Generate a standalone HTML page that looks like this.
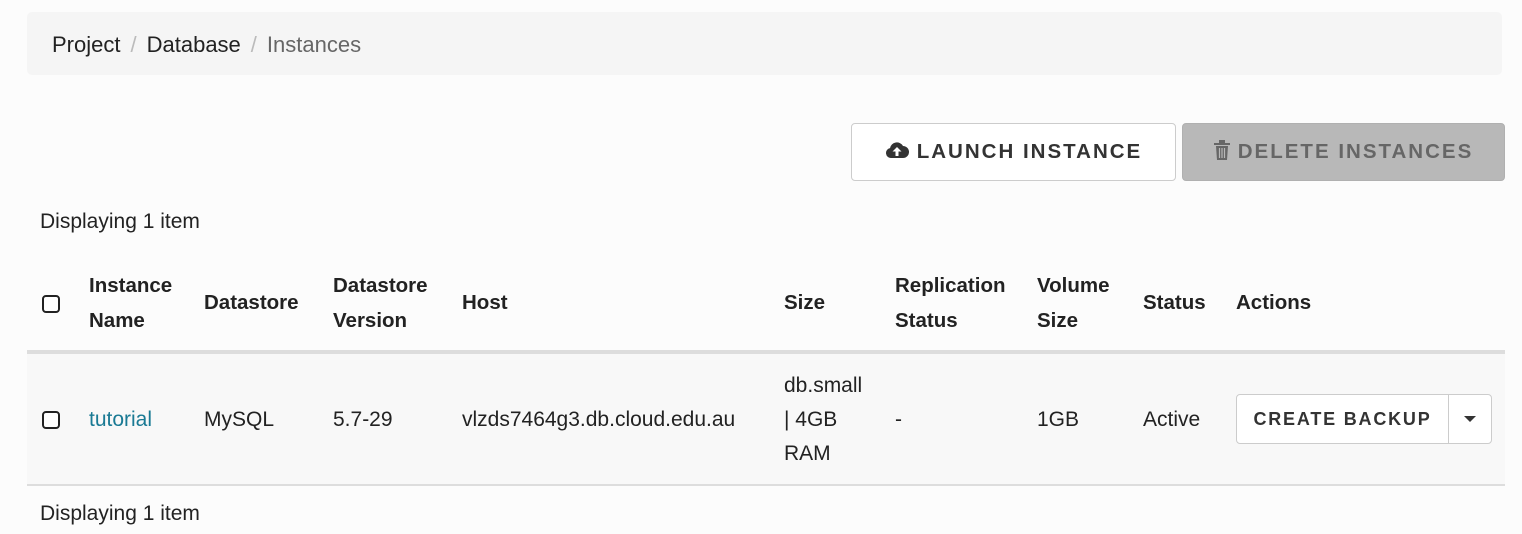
<!DOCTYPE html>
<html><head><meta charset="utf-8"><style>
*{box-sizing:border-box;margin:0;padding:0}
body{width:1522px;height:534px;background:#fcfcfc;font-family:"Liberation Sans",sans-serif;color:#222;position:relative;overflow:hidden;font-size:21px}
.bc{position:absolute;left:27px;top:12px;width:1475px;height:63px;background:#f5f5f5;border-radius:5px;padding:0 25px;line-height:66px;font-size:22px}
.bc .s{color:#bbb;margin:0 10px}
.bc .a{color:#666}
.btn{position:absolute;height:58px;border-radius:4px;font-weight:bold;letter-spacing:2px;font-size:20.5px;line-height:56px;text-align:center}
.b1{left:851px;top:123px;width:325px;background:#fff;border:1px solid #ccc;color:#333}
.b2{left:1182px;top:123px;width:323px;background:#b8b8b8;border:1px solid #b0b0b0;color:#666}
.t{position:absolute;left:40px}
.h{position:absolute;font-weight:bold;line-height:35px;font-size:20.5px}
.c{position:absolute;line-height:34px}
.cb{position:absolute;left:42px;width:18px;height:18px;border:2px solid #222;border-radius:4px;background:#fff}
</style></head><body>
<div class="bc">Project<span class="s">/</span>Database<span class="s">/</span><span class="a">Instances</span></div>
<div class="btn b1"><svg width="24" height="20" viewBox="0 0 24 20" style="vertical-align:-2px;margin-right:8px"><path d="M6 18a5 5 0 0 1-1-9.9A7 7 0 0 1 18 6a6 6 0 0 1 0 12z" fill="#333"/><path d="M12 7l-4.5 4.5h3V16h3v-4.5h3z" fill="#fff"/></svg>LAUNCH INSTANCE</div>
<div class="btn b2"><svg width="16" height="20" viewBox="0 0 16 20" style="vertical-align:-2px;margin-right:8px"><rect x="0" y="3" width="16" height="2" fill="#666"/><rect x="5" y="0" width="6" height="3" fill="#666"/><path d="M2 6h12l-1 14H3z" fill="#666"/><path d="M5.5 8v10M8 8v10M10.5 8v10" stroke="#b8b8b8" stroke-width="1.2"/></svg>DELETE INSTANCES</div>
<div class="t" style="top:210px">Displaying 1 item</div>
<div class="cb" style="top:295px"></div>
<div class="h" style="left:89px;top:268px">Instance<br>Name</div>
<div class="h" style="left:204px;top:285px">Datastore</div>
<div class="h" style="left:333px;top:268px">Datastore<br>Version</div>
<div class="h" style="left:462px;top:285px">Host</div>
<div class="h" style="left:784px;top:285px">Size</div>
<div class="h" style="left:895px;top:268px">Replication<br>Status</div>
<div class="h" style="left:1037px;top:268px">Volume<br>Size</div>
<div class="h" style="left:1143px;top:285px">Status</div>
<div class="h" style="left:1236px;top:285px">Actions</div>
<div style="position:absolute;left:27px;top:350px;width:1478px;height:4px;background:#ddd"></div>
<div style="position:absolute;left:27px;top:354px;width:1478px;height:130px;background:#f8f8f8"></div>
<div style="position:absolute;left:27px;top:484px;width:1478px;height:2px;background:#ddd"></div>
<div class="cb" style="top:411px"></div>
<div class="c" style="left:89px;top:403px;color:#1a7a94">tutorial</div>
<div class="c" style="left:204px;top:403px">MySQL</div>
<div class="c" style="left:333px;top:403px">5.7-29</div>
<div class="c" style="left:462px;top:403px">vlzds7464g3.db.cloud.edu.au</div>
<div class="c" style="left:784px;top:369px">db.small<br>| 4GB<br>RAM</div>
<div class="c" style="left:895px;top:403px">-</div>
<div class="c" style="left:1037px;top:403px">1GB</div>
<div class="c" style="left:1143px;top:403px">Active</div>
<div style="position:absolute;left:1236px;top:394px;width:256px;height:50px;background:#fff;border:1px solid #ccc;border-radius:4px">
<div style="position:absolute;left:0;top:0;width:212px;height:48px;border-right:1px solid #ccc;text-align:center;line-height:48px;font-weight:bold;letter-spacing:1.8px;font-size:18px;color:#333">CREATE BACKUP</div>
<div style="position:absolute;left:227px;top:21px;width:0;height:0;border-left:6px solid transparent;border-right:6px solid transparent;border-top:6px solid #333"></div>
</div>
<div class="t" style="top:502px">Displaying 1 item</div>
</body></html>
